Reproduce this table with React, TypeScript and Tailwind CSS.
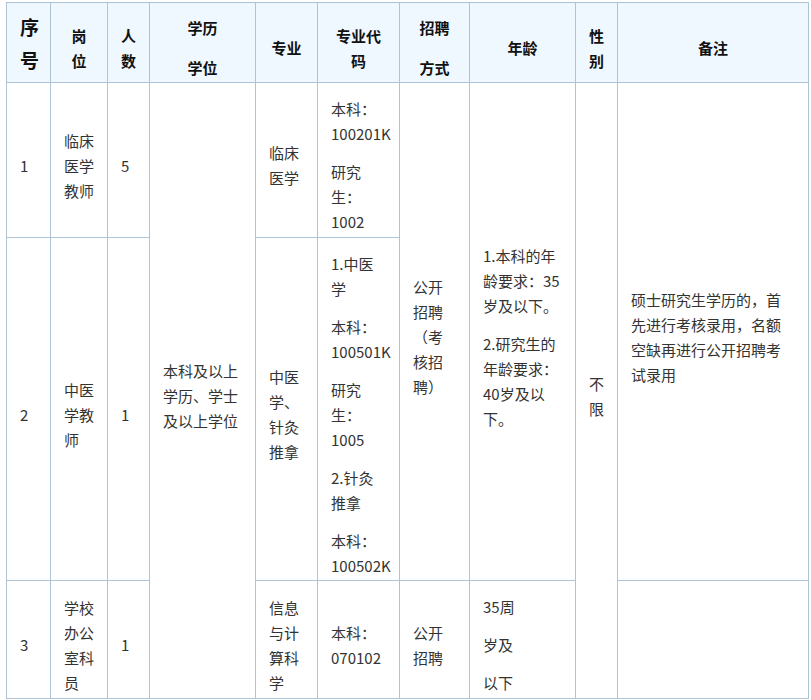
import React from "react";

const cell =
  "border border-[#afc3d6] align-middle pt-[12px] pb-[2px] px-[13px] text-left";
const head =
  "border border-[#afc3d6] bg-[#f0f8ff] align-middle pt-[12px] pb-[2px] px-[13px] text-center font-bold text-[#111] leading-[25px]";

function Paras({ items }: { items: string[] }) {
  return (
    <div className="flex flex-col gap-[13px]">
      {items.map((t) => (
        <p key={t}>{t}</p>
      ))}
    </div>
  );
}

export default function App() {
  return (
    <div className="bg-white min-h-[700px] pl-[6px] pt-[2px] font-['Noto_Sans_CJK_SC',sans-serif] text-[15px] leading-[25px] text-[#333]">
      <table className="w-[802px] table-fixed border-collapse">
        <colgroup>
          <col className="w-[44px]" />
          <col className="w-[57px]" />
          <col className="w-[42px]" />
          <col className="w-[106px]" />
          <col className="w-[62px]" />
          <col className="w-[82px]" />
          <col className="w-[70px]" />
          <col className="w-[106px]" />
          <col className="w-[42px]" />
          <col className="w-[191px]" />
        </colgroup>
        <thead>
          <tr className="h-[80px]">
            <th className="border border-[#afc3d6] bg-[#f0f8ff] align-middle pt-[2px] pb-[2px] px-[13px] text-center font-bold text-[#111] text-[19px] leading-[33px]">
              序号
            </th>
            <th className={head}>
              岗<br />位
            </th>
            <th className={head}>人数</th>
            <th className={head}>
              <div className="flex flex-col gap-[15px]">
                <p>学历</p>
                <p>学位</p>
              </div>
            </th>
            <th className={head}>专业</th>
            <th className={head}>专业代码</th>
            <th className={head}>
              <div className="flex flex-col gap-[15px]">
                <p>招聘</p>
                <p>方式</p>
              </div>
            </th>
            <th className={head}>年龄</th>
            <th className={head}>性别</th>
            <th className={head}>备注</th>
          </tr>
        </thead>
        <tbody>
          <tr className="h-[155px]">
            <td className={cell}>1</td>
            <td className={cell}>临床医学教师</td>
            <td className={cell}>5</td>
            <td className={cell} rowSpan={3}>
              本科及以上学历、学士及以上学位
            </td>
            <td className={cell}>临床医学</td>
            <td className={cell}>
              <Paras items={["本科：100201K", "研究生：1002"]} />
            </td>
            <td className={cell} rowSpan={2}>
              公开招聘（考核招聘）
            </td>
            <td className={cell} rowSpan={2}>
              <Paras
                items={["1.本科的年龄要求：35岁及以下。", "2.研究生的年龄要求：40岁及以下。"]}
              />
            </td>
            <td className={cell} rowSpan={3}>
              不限
            </td>
            <td className={cell} rowSpan={2}>
              硕士研究生学历的，首先进行考核录用，名额空缺再进行公开招聘考试录用
            </td>
          </tr>
          <tr className="h-[343px]">
            <td className={cell}>2</td>
            <td className={cell}>中医学教师</td>
            <td className={cell}>1</td>
            <td className={cell}>中医学、针灸推拿</td>
            <td className={cell}>
              <Paras
                items={[
                  "1.中医学",
                  "本科：100501K",
                  "研究生：1005",
                  "2.针灸推拿",
                  "本科：100502K",
                ]}
              />
            </td>
          </tr>
          <tr className="h-[118px]">
            <td className={cell}>3</td>
            <td className={cell}>学校办公室科员</td>
            <td className={cell}>1</td>
            <td className={cell}>信息与计算科学</td>
            <td className={cell}>本科：070102</td>
            <td className={cell}>公开招聘</td>
            <td className={cell}>
              <Paras items={["35周", "岁及", "以下"]} />
            </td>
            <td className={cell}></td>
          </tr>
        </tbody>
      </table>
    </div>
  );
}
